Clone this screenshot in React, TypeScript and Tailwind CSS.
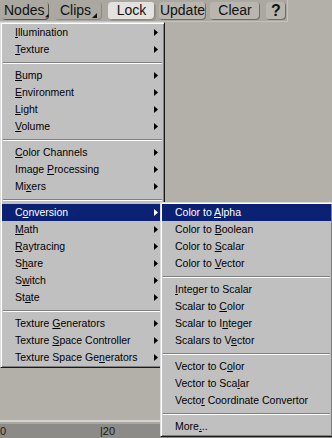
import React from "react"

type Item = [string, number] | null

const MAIN: Item[] = [
  ["Illumination", 0],
  ["Texture", 0],
  null,
  ["Bump", 0],
  ["Environment", 0],
  ["Light", 0],
  ["Volume", 0],
  null,
  ["Color Channels", 0],
  ["Image Processing", 6],
  ["Mixers", 2],
  null,
  ["Conversion", 1],
  ["Math", 0],
  ["Raytracing", 0],
  ["Share", 1],
  ["Switch", 1],
  ["State", 2],
  null,
  ["Texture Generators", 8],
  ["Texture Space Controller", 8],
  ["Texture Space Generators", 16],
]

const SUB: Item[] = [
  ["Color to Alpha", 9],
  ["Color to Boolean", 9],
  ["Color to Scalar", 9],
  ["Color to Vector", 9],
  null,
  ["Integer to Scalar", 0],
  ["Scalar to Color", 10],
  ["Scalar to Integer", 11],
  ["Scalars to Vector", 12],
  null,
  ["Vector to Color", 11],
  ["Vector to Scalar", 13],
  ["Vector Coordinate Convertor", 5],
  null,
  ["More...", 4],
]

function Label({ text, at }: { text: string; at: number }) {
  return (
    <span className="whitespace-pre">
      {text.slice(0, at)}
      <u className="underline-offset-[1px]">{text[at]}</u>
      {text.slice(at + 1)}
    </span>
  )
}

function Arrow({ on }: { on: boolean }) {
  return (
    <svg width="4" height="7" viewBox="0 0 4 7" className="mr-[5px]">
      <polygon points="0,0 4,3.5 0,7" fill={on ? "#fff" : "#000"} />
    </svg>
  )
}

function Menu({ items, active, arrows, className }: { items: Item[]; active: string; arrows: boolean; className: string }) {
  return (
    <div
      className={`absolute flex flex-col bg-[#c0c0c0] p-px border border-t-[#dcdcdc] border-l-[#dcdcdc] border-r-[#1a1a1a] border-b-[#1a1a1a] shadow-[inset_1px_1px_0_#fff,inset_-1px_-1px_0_#808080] ${className}`}
    >
      {items.map((it, i) =>
        it === null ? (
          <div key={i} className="h-[9px] flex flex-col justify-center px-px">
            <div className="h-px bg-[#808080]" />
            <div className="h-px bg-white" />
          </div>
        ) : (
          <div
            key={i}
            className={`h-[17px] flex items-center justify-between pl-[13px] text-[10.5px] ${
              it[0] === active ? "bg-[#0b2173] text-white" : "text-black"
            }`}
          >
            <Label text={it[0]} at={it[1]} />
            {arrows && <Arrow on={it[0] === active} />}
          </div>
        )
      )}
    </div>
  )
}

function ToolButton({ children, className }: { children: React.ReactNode; className: string }) {
  return (
    <div className={`h-[18px] flex items-center justify-center rounded-[4px] text-[14px] text-[#111] ${className}`}>
      {children}
    </div>
  )
}

function DropTri() {
  return (
    <svg width="5" height="5" viewBox="0 0 5 5" className="self-end mb-[2px] ml-[1px]">
      <polygon points="5,0 5,5 0,5" fill="#111" />
    </svg>
  )
}

export default function App() {
  return (
    <div
      className="relative w-[332px] h-[438px] overflow-hidden bg-[#b3b0a9] flex flex-col"
      style={{ fontFamily: "'Liberation Sans', Arial, sans-serif" }}
    >
      {/* toolbar */}
      <div className="h-[22px] w-[288px] bg-[#aaa8a1] border-r border-b border-[#c4c2bb] flex items-center pl-[2px] gap-[4px]">
        <ToolButton className="w-[47px] pl-[2px] shadow-[inset_-1px_-1px_0_#55544f]">
          Nodes
          <DropTri />
        </ToolButton>
        <ToolButton className="w-[47px] ml-[2px] shadow-[inset_-1px_-1px_0_#8a8882]">
          Clips
          <DropTri />
        </ToolButton>
        <ToolButton className="w-[47px] ml-[2px] bg-[#e4e2de] shadow-[inset_-1px_-1px_0_#8a8882,1px_1px_0_#96948e]">
          Lock
        </ToolButton>
        <ToolButton className="w-[47px] bg-[#b9b6b0] shadow-[inset_-1px_-1px_0_#6f6e69]">Update</ToolButton>
        <ToolButton className="w-[50px] bg-[#b9b6b0] shadow-[inset_-1px_-1px_0_#6f6e69]">Clear</ToolButton>
        <ToolButton className="w-[20px] ml-[2px] bg-[#b9b6b0] font-bold text-[16px] shadow-[inset_-1px_-1px_0_#6f6e69]">
          ?
        </ToolButton>
      </div>

      {/* canvas */}
      <div className="flex-1" />

      {/* ruler */}
      <div className="h-[2px] bg-[#d4d2cc]" />
      <div className="h-[2px] bg-[#a9a7a1]" />
      <div className="h-[14px] bg-[#8c8b87] relative text-[11px] text-[#1a1a1a] leading-[14px]">
        <span className="absolute left-0 top-0">0</span>
        <span className="absolute left-[100px] top-0">|20</span>
      </div>

      <Menu items={MAIN} active="Conversion" arrows className="left-0 top-[22px] w-[165px]" />
      <Menu items={SUB} active="Color to Alpha" arrows={false} className="left-[160px] top-[202px] w-[173px]" />
    </div>
  )
}
